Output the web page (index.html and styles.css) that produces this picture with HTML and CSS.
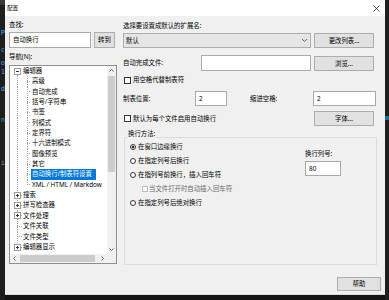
FILE: index.html
```html
<!DOCTYPE html>
<html>
<head>
<meta charset="utf-8">
<title>配置</title>
<link rel="stylesheet" href="styles.css">
</head>
<body>
<div class="screen">
  <div class="editor-left">
    <span class="ln blue">P</span>
    <span class="ln blue">c</span>
    <span class="ln blue">o</span>
    <span class="ln blue">1</span>
    <span class="ln blue">d</span>
    <span class="ln teal">n</span>
    <span class="ln grey">i</span>
  </div>

  <div class="dialog">
    <div class="titlebar">
      <span class="title">配置</span>
      <svg class="close" width="7" height="7" viewBox="0 0 7 7"><path d="M0.5 0.5 L6.5 6.5 M6.5 0.5 L0.5 6.5" stroke="#222" stroke-width="0.8" fill="none"/></svg>
    </div>

    <div class="main">
      <div class="left">
        <div class="label">查找:</div>
        <div class="search-row">
          <div class="field search">自动换行</div>
          <button class="btn goto">转到</button>
        </div>
        <div class="label nav">导航(N):</div>

        <div class="tree">
          <div class="tree-view">
            <div class="row top first"><span class="g0"><i class="box minus"></i></span><span class="name">编辑器</span></div>
            <div class="row kid"><span class="g0"></span><span class="g1"></span><span class="name">高级</span></div>
            <div class="row kid"><span class="g0"></span><span class="g1"></span><span class="name">自动完成</span></div>
            <div class="row kid"><span class="g0"></span><span class="g1"></span><span class="name">括号/字符串</span></div>
            <div class="row kid"><span class="g0"></span><span class="g1"></span><span class="name">书签</span></div>
            <div class="row kid"><span class="g0"></span><span class="g1"></span><span class="name">列模式</span></div>
            <div class="row kid"><span class="g0"></span><span class="g1"></span><span class="name">定界符</span></div>
            <div class="row kid"><span class="g0"></span><span class="g1"></span><span class="name">十六进制模式</span></div>
            <div class="row kid"><span class="g0"></span><span class="g1"></span><span class="name">图像预览</span></div>
            <div class="row kid"><span class="g0"></span><span class="g1"></span><span class="name">其它</span></div>
            <div class="row kid"><span class="g0"></span><span class="g1"></span><span class="name selected">自动换行/制表符设置</span></div>
            <div class="row kid last"><span class="g0"></span><span class="g1"></span><span class="name">XML / HTML / Markdow</span></div>
            <div class="row top"><span class="g0"><i class="box plus"></i></span><span class="name">搜索</span></div>
            <div class="row top"><span class="g0"><i class="box plus"></i></span><span class="name">拼写检查器</span></div>
            <div class="row top"><span class="g0"><i class="box plus"></i></span><span class="name">文件处理</span></div>
            <div class="row top"><span class="g0"></span><span class="name">文件关联</span></div>
            <div class="row top"><span class="g0"></span><span class="name">文件类型</span></div>
            <div class="row top"><span class="g0"><i class="box plus"></i></span><span class="name">编辑器显示</span></div>
          </div>
          <div class="vbar">
            <svg class="arrow" width="9" height="9" viewBox="0 0 9 9"><path d="M2.5 5.5 L4.5 3.5 L6.5 5.5" stroke="#606060" fill="none"/></svg>
            <div class="vthumb"></div>
            <svg class="arrow arrow-end" width="9" height="9" viewBox="0 0 9 9"><path d="M2.5 3.5 L4.5 5.5 L6.5 3.5" stroke="#606060" fill="none"/></svg>
          </div>
          <div class="hbar">
            <svg class="arrow" width="9" height="9" viewBox="0 0 9 9"><path d="M5.5 2.5 L3.5 4.5 L5.5 6.5" stroke="#606060" fill="none"/></svg>
            <div class="hthumb"></div>
            <svg class="arrow arrow-end" width="9" height="9" viewBox="0 0 9 9"><path d="M3.5 2.5 L5.5 4.5 L3.5 6.5" stroke="#606060" fill="none"/></svg>
          </div>
          <div class="corner"></div>
        </div>
      </div>

      <div class="settings">
        <div class="label">选择要设置成默认的扩展名:</div>
        <div class="row1">
          <div class="select">
            <span>默认</span>
            <svg width="7" height="5" viewBox="0 0 7 5"><path d="M1 1 L3.5 3.5 L6 1" stroke="#444" stroke-width="0.8" fill="none"/></svg>
          </div>
          <button class="btn wide">更改列表...</button>
        </div>
        <div class="row2">
          <span class="row2-label">自动完成文件:</span>
          <div class="field auto"></div>
          <button class="btn wide">浏览...</button>
        </div>
        <div class="check-row">
          <i class="check"></i><span>用空格代替制表符</span>
        </div>
        <div class="row4">
          <span class="tab-label">制表位置:</span>
          <div class="field tab">2</div>
          <span class="indent-label">缩进空格:</span>
          <div class="field indent">2</div>
        </div>
        <div class="row5">
          <div class="check-row inline">
            <i class="check"></i><span>默认为每个文件启用自动换行</span>
          </div>
          <button class="btn wide font">字体...</button>
        </div>

        <div class="group">
          <div class="legend">换行方法:</div>
          <div class="group-body">
            <div class="radios">
              <div class="radio-row"><i class="radio on"></i><span>在窗口边缘换行</span></div>
              <div class="radio-row"><i class="radio"></i><span>在指定列号后换行</span></div>
              <div class="radio-row"><i class="radio"></i><span>在指列号前换行，插入回车符</span></div>
              <div class="radio-row sub"><i class="check off"></i><span>当文件打开时自动插入回车符</span></div>
              <div class="radio-row"><i class="radio"></i><span>在指定列号后绝对换行</span></div>
            </div>
            <div class="wrap-col">
              <div class="label">换行列号:</div>
              <div class="field col">80</div>
            </div>
          </div>
        </div>
      </div>
    </div>

    <div class="footer">
      <button class="btn help">帮助</button>
    </div>
  </div>

  <div class="editor-right">
    <div class="mark"></div>
  </div>
</div>
</body>
</html>
```

FILE: styles.css
```css
* {
  box-sizing: border-box;
}

body {
  margin: 0;
  background-color: #141414;
  font-family: "Noto Sans", "Noto Sans CJK SC", sans-serif;
  font-size: 6.4px;
  line-height: 8px;
  color: #000;
  overflow: hidden;
}

.screen {
  display: flex;
  width: 389px;
  height: 300px;
}

/* code editor showing behind the dialog */
.editor-left {
  width: 5px;
  flex: none;
  background-color: #1e1e1e;
  border-top: 5px solid #3c3c3c;
  display: flex;
  flex-direction: column;
  align-items: flex-end;
  overflow: hidden;
  font-family: "DejaVu Sans Mono", monospace;
  font-size: 7px;
  line-height: 8px;
}

.ln:nth-child(1) { margin-top: 24px; }
.ln:nth-child(2) { margin-top: 9px; }
.ln:nth-child(3) { margin-top: 5px; }
.ln:nth-child(4) { margin-top: 1px; }
.ln:nth-child(5) { margin-top: 9px; }
.ln:nth-child(6) { margin-top: 23px; }
.ln:nth-child(7) { margin-top: 35px; }

.blue { color: #3fa0e8; }
.teal { color: #2aa3b8; }
.grey { color: #8a8a8a; }

.editor-right {
  flex: 1;
  background-color: #1e1e1e;
  padding-top: 116px;
}

.mark {
  height: 4px;
  background-color: #1f6f8b;
}

.dialog {
  width: 380px;
  height: 295px;
  flex: none;
  background-color: #f0f0f0;
  display: flex;
  flex-direction: column;
  border-bottom: 1px solid #dadada;
}

.titlebar {
  height: 16px;
  flex: none;
  background-color: #fff;
  display: flex;
  align-items: center;
  justify-content: space-between;
  padding: 0 5px 0 2px;
}

.title {
  font-size: 5.6px;
}

.main {
  display: flex;
  gap: 6px;
  padding-left: 4px;
}

.left {
  width: 108px;
  flex: none;
  padding-top: 5px;
}

.settings {
  width: 254px;
  flex: none;
  padding-top: 6px;
}

.field {
  background-color: #fff;
  border: 1px solid #a9a9a9;
  padding-left: 3px;
  display: flex;
  align-items: center;
}

.btn {
  background-color: #e1e1e1;
  border: 1px solid #adadad;
  font-family: inherit;
  font-size: 6.4px;
  line-height: 8px;
  padding: 0;
  color: #000;
}

.search-row {
  display: flex;
  margin-top: 3px;
  height: 16px;
}

.search {
  width: 82px;
}

.goto {
  width: 21px;
  margin-left: 3px;
}

.nav {
  margin-top: 5px;
}

/* navigation tree */
.tree {
  margin-top: 4px;
  width: 108px;
  height: 199px;
  border: 1px solid #8f8f8f;
  background-color: #fff;
  display: grid;
  grid-template-columns: 1fr 9px;
  grid-template-rows: 1fr 9px;
}

.tree-view {
  overflow: hidden;
}

.row {
  display: flex;
  height: 10.35px;
  white-space: nowrap;
}

.g0 {
  width: 12px;
  flex: none;
  display: flex;
  align-items: center;
  background:
    repeating-linear-gradient(to bottom, #a0a0a0 0 1px, transparent 1px 2px) 7px 0 / 1px 100% no-repeat;
}

.top .g0 {
  background:
    repeating-linear-gradient(to right, #a0a0a0 0 1px, transparent 1px 2px) 7px 50% / 5px 1px no-repeat,
    repeating-linear-gradient(to bottom, #a0a0a0 0 1px, transparent 1px 2px) 7px 0 / 1px 100% no-repeat;
}

.top.first .g0 {
  background:
    repeating-linear-gradient(to bottom, #a0a0a0 0 1px, transparent 1px 2px) 7px 100% / 1px 50% no-repeat;
}

.g1 {
  width: 9px;
  flex: none;
  background:
    repeating-linear-gradient(to right, #a0a0a0 0 1px, transparent 1px 2px) 5px 50% / 4px 1px no-repeat,
    repeating-linear-gradient(to bottom, #a0a0a0 0 1px, transparent 1px 2px) 5px 0 / 1px 100% no-repeat;
}

.last .g1 {
  background:
    repeating-linear-gradient(to right, #a0a0a0 0 1px, transparent 1px 2px) 5px 50% / 4px 1px no-repeat,
    repeating-linear-gradient(to bottom, #a0a0a0 0 1px, transparent 1px 2px) 5px 0 / 1px 50% no-repeat;
}

.box {
  width: 7px;
  height: 7px;
  margin-left: 4px;
  border: 1px solid #9a9a9a;
  background-color: #fff;
}

.minus {
  background: linear-gradient(#333, #333) center / 3px 1px no-repeat, #fff;
}

.plus {
  background:
    linear-gradient(#333, #333) center / 3px 1px no-repeat,
    linear-gradient(#333, #333) center / 1px 3px no-repeat,
    #fff;
}

.name {
  padding: 0 1px;
  line-height: 10.35px;
}

.selected {
  background-color: #0078d7;
  color: #fff;
  padding-right: 4px;
}

.vbar {
  background-color: #f0f0f0;
  display: flex;
  flex-direction: column;
}

.vthumb {
  height: 96px;
  margin: 1px 1px 0;
  background-color: #cdcdcd;
}

.arrow {
  display: block;
  flex: none;
}

.vbar .arrow-end {
  margin-top: auto;
}

.hbar {
  background-color: #f0f0f0;
  display: flex;
}

.hbar .arrow-end {
  margin-left: auto;
}

.hthumb {
  width: 75px;
  margin: 1px 0 1px 1px;
  background-color: #cdcdcd;
}

.corner {
  background-color: #f0f0f0;
}

/* settings column */
.row1 {
  display: flex;
  margin-top: 3px;
  height: 15px;
}

.select {
  width: 188px;
  background-color: #e5e5e5;
  border: 1px solid #adadad;
  display: flex;
  align-items: center;
  justify-content: space-between;
  padding: 0 2px;
}

.wide {
  width: 60px;
  margin-left: 3px;
}

.row2 {
  display: flex;
  margin-top: 7px;
  height: 16px;
  align-items: center;
}

.row2-label {
  width: 78px;
}

.auto {
  width: 110px;
  height: 16px;
}

.row2 .btn {
  height: 15px;
  align-self: flex-end;
}

.check-row {
  display: flex;
  align-items: center;
  margin-top: 5px;
  height: 8px;
}

.check {
  width: 7px;
  height: 7px;
  margin: 0 2px 0 1px;
  border: 1px solid #333;
  background-color: #fff;
}

.row4 {
  display: flex;
  margin-top: 7px;
  height: 15px;
  align-items: center;
}

.tab-label {
  width: 72px;
}

.tab {
  width: 32px;
  height: 15px;
}

.indent-label {
  width: 63px;
  margin-left: 23px;
}

.indent {
  width: 63px;
  height: 15px;
}

.row5 {
  display: flex;
  margin-top: 5px;
  height: 15px;
  align-items: center;
}

.inline {
  margin-top: 0;
}

.font {
  height: 15px;
  margin-left: auto;
  margin-right: 3px;
}

.group {
  margin: 11px 0 0 1px;
  width: 253px;
  height: 128px;
  border: 1px solid #dcdcdc;
}

.legend {
  width: fit-content;
  margin: -8px 0 0 2px;
  padding: 0 1px;
  background-color: #f0f0f0;
}

.group-body {
  display: flex;
}

.radios {
  width: 180px;
  padding: 2px 0 0 5px;
}

.radio-row {
  display: flex;
  align-items: center;
  height: 14px;
}

.radio {
  width: 6px;
  height: 6px;
  margin-right: 2px;
  border: 1px solid #333;
  border-radius: 50%;
  background-color: #fff;
}

.radio.on {
  background: radial-gradient(circle, #222 0 1.4px, #fff 1.6px);
}

.sub {
  padding-left: 12px;
  color: #6d6d6d;
}

.check.off {
  width: 6px;
  height: 6px;
  margin: 0 1px 0 0;
  border-color: #bcbcbc;
}

.wrap-col {
  padding-top: 12px;
}

.col {
  width: 36px;
  height: 15px;
  margin-top: 3px;
}

.footer {
  display: flex;
  justify-content: flex-end;
  padding: 12px 4px 0 0;
}

.help {
  width: 44px;
  height: 14px;
}
```
